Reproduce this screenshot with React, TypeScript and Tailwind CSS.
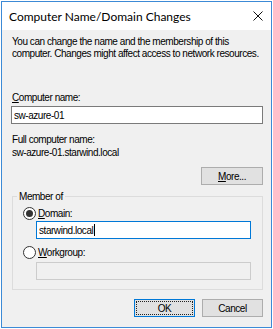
const font = { fontFamily: '"Liberation Sans", Arial, sans-serif', letterSpacing: "-0.45px" }

function Radio({ checked }: { checked?: boolean }) {
  return (
    <span className="w-[13px] h-[13px] rounded-full border border-[#333] bg-white flex items-center justify-center shrink-0">
      {checked && <span className="w-[7px] h-[7px] rounded-full bg-[#333]" />}
    </span>
  )
}

function CloseIcon() {
  return (
    <svg width="10" height="10" viewBox="0 0 10 10" className="shrink-0">
      <path d="M0.5 0.5 L9.5 9.5 M9.5 0.5 L0.5 9.5" stroke="#111" strokeWidth="1" fill="none" />
    </svg>
  )
}

export default function App() {
  return (
    <div className="w-[273px] h-[329px] bg-white pl-px pt-px">
      <div
        className="w-[271px] h-[327px] border border-[#3c8ad6] bg-[#f0f0f0] flex flex-col text-[10px] text-black leading-[13px]"
        style={font}
      >
        <div className="h-[28px] shrink-0 bg-white flex items-center justify-between pl-[7px] pr-[8px]">
          <span className="text-[12px] tracking-[0px]" style={{ fontFamily: 'Lato, "Liberation Sans", sans-serif' }}>
            Computer Name/Domain Changes
          </span>
          <CloseIcon />
        </div>

        <div className="flex flex-col pl-[9px] pr-[8px] pt-[6px]">
          <p className="ml-px leading-[12px]">
            You can change the name and the membership of this computer. Changes might affect access to network resources.
          </p>

          <label className="mt-[31px] ml-px">
            <span className="underline">C</span>omputer name:
          </label>
          <div className="mt-[2px] h-[18px] border border-[#7a7a7a] bg-white flex items-center px-[2px]">sw-azure-01</div>

          <div className="mt-[9px] ml-px">Full computer name:</div>
          <div className="ml-px">sw-azure-01.starwind.local</div>

          <div className="flex justify-end mt-[8px]">
            <button className="w-[62px] h-[18px] border border-[#adadad] bg-[#e1e1e1] text-[10px] leading-[13px]">
              <span className="underline">M</span>ore...
            </button>
          </div>

          <fieldset className="mt-[5px] ml-px border border-[#dcdcdc] pl-[10px] pr-[11px] pb-[9px] pt-0">
            <legend className="px-[2px] -ml-[6px] leading-[13px]">Member of</legend>
            <div className="flex items-center gap-[2px] mt-[4px]">
              <Radio checked />
              <span>
                <span className="underline">D</span>omain:
              </span>
            </div>
            <div className="ml-[13px] mt-px h-[18px] border border-[#0078d7] bg-white flex items-center px-[2px]">
              starwind.local<span className="w-px h-[12px] bg-black ml-px" />
            </div>
            <div className="flex items-center gap-[2px] mt-[7px]">
              <Radio />
              <span>
                <span className="underline">W</span>orkgroup:
              </span>
            </div>
            <div className="ml-[13px] mt-[3px] h-[18px] border border-[#cccccc] bg-[#f0f0f0]" />
          </fieldset>

          <div className="flex justify-end gap-[7px] mt-[9px]">
            <button className="w-[61px] h-[18px] border border-[#0078d7] bg-[#e1e1e1] p-px">
              <span className="h-full border border-dotted border-[#222] flex items-center justify-center leading-[13px]">OK</span>
            </button>
            <button className="w-[61px] h-[18px] border border-[#adadad] bg-[#e1e1e1] leading-[13px]">Cancel</button>
          </div>
        </div>
      </div>
    </div>
  )
}
